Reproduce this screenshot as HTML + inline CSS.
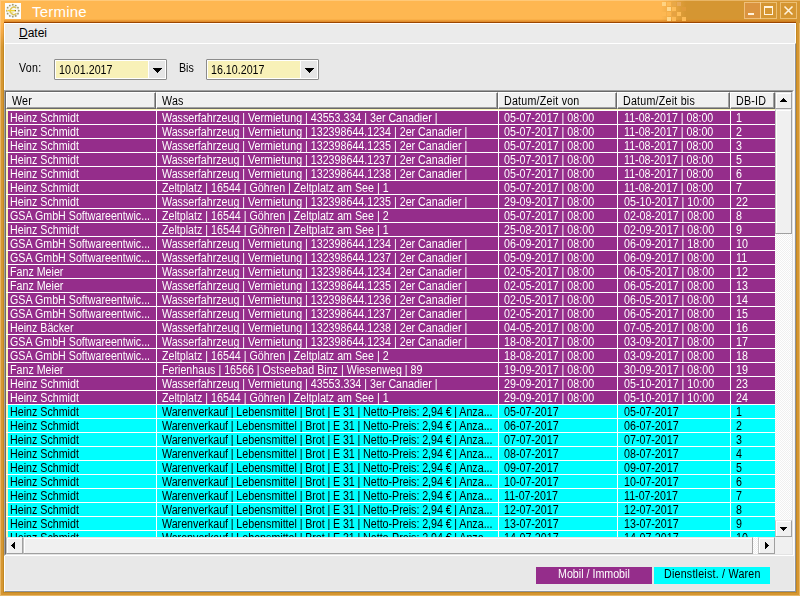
<!DOCTYPE html>
<html lang="de"><head><meta charset="utf-8"><title>Termine</title>
<style>
html,body{margin:0;padding:0}
body{width:800px;height:596px;overflow:hidden;position:relative;background:#D59632;font-family:"Liberation Sans",sans-serif;font-size:11px;color:#000}
div,span{box-sizing:border-box}
.abs{position:absolute}
.t{display:inline-block;font-style:normal;font-weight:normal;transform:scaleX(.89);transform-origin:0 50%;white-space:nowrap}
/* window frame */
#frame{left:0;top:0;width:800px;height:596px;background:#D59632}
#frLg{left:0;top:23px;width:4px;height:40px;background:linear-gradient(to bottom,#FEB751 0,#F2A845 10px,#D59632 24px)}
#frL{left:0;top:0;width:1px;height:596px;background:linear-gradient(to bottom,#FFC57A 0,#FFC57A 26px,#E8B868 48px)}
#frL3{left:3px;top:23px;width:1px;height:570px;background:linear-gradient(to bottom,#F0A23C 0,#E09A38 10px,#C48820 24px)}
#frR{left:796px;top:23px;width:1px;height:570px;background:#C48820}
#frR3{left:799px;top:0;width:1px;height:596px;background:#E8B868}
#frB{left:3px;top:592px;width:794px;height:1px;background:#C48820}
#frB3{left:0;top:595px;width:800px;height:1px;background:#E8B868}
/* title bar */
#tb{left:0;top:0;width:800px;height:23px;background:linear-gradient(to right,#FEB751 0,#FEB751 661px,#D59632 686px,#D59632 100%)}
#tbTop{left:0;top:0;width:800px;height:1px;background:linear-gradient(to right,#FFC978 0,#FFC978 661px,#E8B565 686px)}
#tbBot{left:0;top:19px;width:800px;height:4px;background:linear-gradient(to bottom,rgba(240,150,40,.0) 0,rgba(230,140,30,.35) 1px,rgba(200,110,20,.55) 2px,rgba(200,110,20,.6) 3px,#9C4600 3px,#9C4600 4px)}
#tbBotL{left:0;top:19px;width:4px;height:4px;background:#FEB751}
#tbBotR{left:796px;top:19px;width:4px;height:4px;background:#D59632}
#icon{left:5px;top:3px;width:16px;height:16px;background:#FDFDFB}
#title{left:32px;top:2px;height:19px;line-height:19px;font-size:15px;color:#fff;white-space:nowrap;letter-spacing:0.2px}
.sq{position:absolute;width:4px;height:4px}
.cb{position:absolute;top:2px;height:17px;border:1px solid rgba(255,225,170,.55)}
/* client */
#client{left:4px;top:23px;width:792px;height:569px;background:#E9E9E9}
#menu{left:0;top:0;width:792px;height:20px;background:#EBEBEB;border-top:1px solid #fff;border-left:1px solid #fff;border-right:1px solid #fff}
#menuitem{left:14px;top:2px;font-size:12px;line-height:14px;white-space:nowrap}
#menuitem u{text-decoration-thickness:1px;text-underline-offset:1px}
#panel{will-change:transform;left:0;top:20px;width:792px;height:549px;box-shadow:inset -1px -1px 0 #F2F2F2;background:#E8E8E8;border-top:1px solid #fff;border-left:1px solid #fff;border-right:1px solid #8E939B;border-bottom:1px solid #8E939B}
.lbl{position:absolute;font-size:12px;line-height:14px;white-space:nowrap}
.dp{position:absolute;top:15px;width:113px;height:21px;border:1px solid #8C8C8C;background:#fff;border-radius:1px}
.dp .tx{position:absolute;left:1px;top:1px;width:92px;height:17px;background:#F8F1B8;font-size:12px;line-height:19px;padding-left:3px;white-space:nowrap;overflow:hidden}
.dp .bt{position:absolute;left:94px;top:1px;width:16px;height:17px;background:#E6E6E6}
/* list view */
#lv{left:-1px;top:46px;width:790px;height:466px;border-top:1px solid #A0A0A0;border-left:1px solid #A0A0A0;border-right:1px solid #fff;border-bottom:1px solid #fff;background:#A0A0A0}
#lvi{left:0;top:0;width:788px;height:464px;border-top:1px solid #696969;border-left:1px solid #696969;border-right:1px solid #E3E3E3;border-bottom:1px solid #E3E3E3;background:#FAF4B6;overflow:hidden}
#hdr{left:0;top:0;width:769px;height:17px;background:#F0F0F0}
.h{position:absolute;top:0;height:17px;background:#F0F0F0;border-top:1px solid #fff;border-left:1px solid #fff;border-right:1px solid #696969;border-bottom:1px solid #696969;font-size:12px;line-height:13px;white-space:nowrap;overflow:hidden}
.h i{position:absolute;right:0;bottom:0;left:0;top:0;border-right:1px solid #A0A0A0;border-bottom:1px solid #A0A0A0}
.h b{font-weight:normal;position:absolute;left:5px;top:2px;letter-spacing:.25px}
#rows{left:0;top:18px;width:769px;height:427px;overflow:hidden;border-top:1px solid #fff}
.r{position:relative;height:14px;width:769px;border-bottom:1px solid #fff;background:linear-gradient(to right,#FAF4B6 0,#FAF4B6 2px,#fff 2px);white-space:nowrap;line-height:13px;font-size:12px}
.r span{position:absolute;top:0;height:13px;overflow:hidden;padding-left:2px;line-height:15px}
.p span{background:#952D8B;color:#fff}
.c span{background:#00FFFF;color:#000}
.c .c2 .t{word-spacing:-.25px}
.c1{left:2px;width:148px}
.c2{left:151px;width:341px;padding-left:5px !important}
.c3{left:493px;width:118px;padding-left:5px !important}
.c4{left:612px;width:112px;padding-left:6px !important}
.c5{left:725px;width:44px;padding-left:5px !important}
/* scrollbars */
.sbb{position:absolute;background:#F0F0F0;border-top:1px solid #E8E8E8;border-left:1px solid #C4C4C4;border-right:1px solid #A0A0A0;border-bottom:1px solid #A0A0A0;box-shadow:inset 1px 1px 0 #fff}
.trk{position:absolute;background-color:#fff;background-image:linear-gradient(45deg,#F0F0F0 25%,transparent 25%,transparent 75%,#F0F0F0 75%),linear-gradient(45deg,#F0F0F0 25%,transparent 25%,transparent 75%,#F0F0F0 75%);background-size:2px 2px;background-position:0 0,1px 1px}
.arr{position:absolute;width:0;height:0}
/* legend */
.lg{position:absolute;top:523px;height:17px;line-height:15px;font-size:12px;white-space:nowrap}
</style></head>
<body>
<div id="frame" class="abs"></div>
<div id="frLg" class="abs"></div>
<div id="frL" class="abs"></div>
<div id="frL3" class="abs"></div>
<div id="frR" class="abs"></div>
<div id="frR3" class="abs"></div>
<div id="frB" class="abs"></div>
<div id="frB3" class="abs"></div>

<div id="tb" class="abs"></div>
<div id="tbTop" class="abs"></div>
<div id="tbBot" class="abs"></div>
<div id="tbBotL" class="abs"></div>
<div id="tbBotR" class="abs"></div>
<div class="abs" style="left:0;top:0;width:1px;height:23px;background:#FFC57A"></div>

<div id="sqs">
<div class="sq" style="left:662px;top:2px;background:#FFD382"></div>
<div class="sq" style="left:667px;top:2px;background:#FDBA55"></div>
<div class="sq" style="left:672px;top:2px;background:#E8A848"></div>
<div class="sq" style="left:677px;top:2px;background:#E8AA5A"></div>
<div class="sq" style="left:667px;top:7px;background:#FFD88C"></div>
<div class="sq" style="left:672px;top:7px;background:#FDBC58"></div>
<div class="sq" style="left:682px;top:7px;background:#E09A3A"></div>
<div class="sq" style="left:662px;top:12px;background:#FDB852"></div>
<div class="sq" style="left:667px;top:12px;background:#FDB650"></div>
<div class="sq" style="left:672px;top:12px;background:#E6A242"></div>
<div class="sq" style="left:677px;top:12px;background:#FDBC58"></div>
<div class="sq" style="left:667px;top:17px;background:#FFD88C"></div>
<div class="sq" style="left:672px;top:17px;background:#FDBA55"></div>
<div class="sq" style="left:682px;top:17px;background:#FDBA55"></div>
</div>

<div id="icon" class="abs">
<svg width="16" height="16" viewBox="0 0 16 16">
<circle cx="7.8" cy="7.7" r="6.6" fill="#F1F0EA"/>
<circle cx="7.8" cy="7.7" r="4.6" fill="#FAFAF7"/>
<g fill="#9C9668"><circle cx="7.8" cy="1.7" r="0.85"/><circle cx="10.8" cy="2.5" r="0.85"/><circle cx="13.0" cy="4.7" r="0.85"/><circle cx="13.8" cy="7.7" r="0.85"/><circle cx="13.0" cy="10.7" r="0.85"/><circle cx="10.8" cy="12.9" r="0.85"/><circle cx="7.8" cy="13.7" r="0.85"/><circle cx="4.8" cy="12.9" r="0.85"/><circle cx="2.6" cy="10.7" r="0.85"/><circle cx="1.8" cy="7.7" r="0.85"/><circle cx="2.6" cy="4.7" r="0.85"/><circle cx="4.8" cy="2.5" r="0.85"/></g>
<path d="M11.2 4.9 A3.7 3.7 0 1 0 11.4 10.6" fill="none" stroke="#B8A040" stroke-width="1.3" opacity=".75"/>
<path d="M11.2 4.9 A3.7 3.7 0 1 0 11.4 10.6" fill="none" stroke="#EFD23C" stroke-width="0.7"/>
<path d="M1.6 7.6 H3.2" stroke="#F4E27A" stroke-width="1.2"/><path d="M3 7.6 H10.8" stroke="#F2D62C" stroke-width="1.4"/>
<path d="M9.8 7.6 H11" stroke="#7A6E30" stroke-width="1.2"/>
<path d="M4.4 9.2 H8.6" stroke="#E6CF5A" stroke-width="0.7"/>
</svg>
</div>
<div id="title" class="abs">Termine</div>

<div class="cb" style="left:744px;width:17px;background:#DB9440"></div>
<div class="cb" style="left:760px;width:17px"></div>
<div class="cb" style="left:780px;width:17px"></div>
<div class="abs" style="left:748px;top:13px;width:6px;height:2px;background:#FFF3DC"></div>
<div class="abs" style="left:764px;top:6px;width:9px;height:9px;border:1px solid #FFF3DC;border-top-width:2px"></div>
<svg class="abs" style="left:783px;top:5px" width="11" height="11" viewBox="0 0 11 11"><path d="M1.5 1.5 L9.5 9.5 M9.5 1.5 L1.5 9.5" stroke="#FFF3DC" stroke-width="1.6" fill="none"/></svg>

<div id="client" class="abs">
  <div id="menu" class="abs"><div id="menuitem" class="abs"><u>D</u>atei</div></div>
  <div id="panel" class="abs">
    <div class="lbl" style="left:14px;top:17px"><em class="t" style="letter-spacing:.3px">Von:</em></div>
    <div class="dp" style="left:49px"><div class="tx"><em class="t">10.01.2017</em></div><div class="bt"><svg class="abs" style="left:4px;top:7px" width="9" height="5" viewBox="0 0 9 5" shape-rendering="crispEdges"><path d="M0 0h9v1h-9zM1 1h7v1h-7zM2 2h5v1h-5zM3 3h3v1h-3zM4 4h1v1h-1z" fill="#000"/></svg></div></div>
    <div class="lbl" style="left:174px;top:17px"><em class="t">Bis</em></div>
    <div class="dp" style="left:201px"><div class="tx"><em class="t">16.10.2017</em></div><div class="bt"><svg class="abs" style="left:4px;top:7px" width="9" height="5" viewBox="0 0 9 5" shape-rendering="crispEdges"><path d="M0 0h9v1h-9zM1 1h7v1h-7zM2 2h5v1h-5zM3 3h3v1h-3zM4 4h1v1h-1z" fill="#000"/></svg></div></div>

    <div id="lv" class="abs"><div id="lvi" class="abs">
      <div id="hdr" class="abs">
        <div class="h" style="left:0;width:150px"><i></i><b class="t">Wer</b></div>
        <div class="h" style="left:150px;width:342px"><i></i><b class="t">Was</b></div>
        <div class="h" style="left:492px;width:119px"><i></i><b class="t">Datum/Zeit von</b></div>
        <div class="h" style="left:611px;width:113px"><i></i><b class="t">Datum/Zeit bis</b></div>
        <div class="h" style="left:724px;width:45px"><i></i><b class="t">DB-ID</b></div>
      </div>
      <div id="rows" class="abs">
<div class="r p"><span class="c1"><em class="t">Heinz Schmidt</em></span><span class="c2"><em class="t">Wasserfahrzeug | Vermietung | 43553.334 | 3er Canadier |</em></span><span class="c3"><em class="t">05-07-2017 | 08:00</em></span><span class="c4"><em class="t">11-08-2017 | 08:00</em></span><span class="c5"><em class="t">1</em></span></div>
<div class="r p"><span class="c1"><em class="t">Heinz Schmidt</em></span><span class="c2"><em class="t">Wasserfahrzeug | Vermietung | 132398644.1234 | 2er Canadier |</em></span><span class="c3"><em class="t">05-07-2017 | 08:00</em></span><span class="c4"><em class="t">11-08-2017 | 08:00</em></span><span class="c5"><em class="t">2</em></span></div>
<div class="r p"><span class="c1"><em class="t">Heinz Schmidt</em></span><span class="c2"><em class="t">Wasserfahrzeug | Vermietung | 132398644.1235 | 2er Canadier |</em></span><span class="c3"><em class="t">05-07-2017 | 08:00</em></span><span class="c4"><em class="t">11-08-2017 | 08:00</em></span><span class="c5"><em class="t">3</em></span></div>
<div class="r p"><span class="c1"><em class="t">Heinz Schmidt</em></span><span class="c2"><em class="t">Wasserfahrzeug | Vermietung | 132398644.1237 | 2er Canadier |</em></span><span class="c3"><em class="t">05-07-2017 | 08:00</em></span><span class="c4"><em class="t">11-08-2017 | 08:00</em></span><span class="c5"><em class="t">5</em></span></div>
<div class="r p"><span class="c1"><em class="t">Heinz Schmidt</em></span><span class="c2"><em class="t">Wasserfahrzeug | Vermietung | 132398644.1238 | 2er Canadier |</em></span><span class="c3"><em class="t">05-07-2017 | 08:00</em></span><span class="c4"><em class="t">11-08-2017 | 08:00</em></span><span class="c5"><em class="t">6</em></span></div>
<div class="r p"><span class="c1"><em class="t">Heinz Schmidt</em></span><span class="c2"><em class="t">Zeltplatz | 16544 | Göhren | Zeltplatz am See | 1</em></span><span class="c3"><em class="t">05-07-2017 | 08:00</em></span><span class="c4"><em class="t">11-08-2017 | 08:00</em></span><span class="c5"><em class="t">7</em></span></div>
<div class="r p"><span class="c1"><em class="t">Heinz Schmidt</em></span><span class="c2"><em class="t">Wasserfahrzeug | Vermietung | 132398644.1235 | 2er Canadier |</em></span><span class="c3"><em class="t">29-09-2017 | 08:00</em></span><span class="c4"><em class="t">05-10-2017 | 10:00</em></span><span class="c5"><em class="t">22</em></span></div>
<div class="r p"><span class="c1"><em class="t">GSA GmbH Softwareentwic...</em></span><span class="c2"><em class="t">Zeltplatz | 16544 | Göhren | Zeltplatz am See | 2</em></span><span class="c3"><em class="t">05-07-2017 | 08:00</em></span><span class="c4"><em class="t">02-08-2017 | 08:00</em></span><span class="c5"><em class="t">8</em></span></div>
<div class="r p"><span class="c1"><em class="t">Heinz Schmidt</em></span><span class="c2"><em class="t">Zeltplatz | 16544 | Göhren | Zeltplatz am See | 1</em></span><span class="c3"><em class="t">25-08-2017 | 08:00</em></span><span class="c4"><em class="t">02-09-2017 | 08:00</em></span><span class="c5"><em class="t">9</em></span></div>
<div class="r p"><span class="c1"><em class="t">GSA GmbH Softwareentwic...</em></span><span class="c2"><em class="t">Wasserfahrzeug | Vermietung | 132398644.1234 | 2er Canadier |</em></span><span class="c3"><em class="t">06-09-2017 | 08:00</em></span><span class="c4"><em class="t">06-09-2017 | 18:00</em></span><span class="c5"><em class="t">10</em></span></div>
<div class="r p"><span class="c1"><em class="t">GSA GmbH Softwareentwic...</em></span><span class="c2"><em class="t">Wasserfahrzeug | Vermietung | 132398644.1237 | 2er Canadier |</em></span><span class="c3"><em class="t">05-09-2017 | 08:00</em></span><span class="c4"><em class="t">06-09-2017 | 08:00</em></span><span class="c5"><em class="t">11</em></span></div>
<div class="r p"><span class="c1"><em class="t">Fanz Meier</em></span><span class="c2"><em class="t">Wasserfahrzeug | Vermietung | 132398644.1234 | 2er Canadier |</em></span><span class="c3"><em class="t">02-05-2017 | 08:00</em></span><span class="c4"><em class="t">06-05-2017 | 08:00</em></span><span class="c5"><em class="t">12</em></span></div>
<div class="r p"><span class="c1"><em class="t">Fanz Meier</em></span><span class="c2"><em class="t">Wasserfahrzeug | Vermietung | 132398644.1235 | 2er Canadier |</em></span><span class="c3"><em class="t">02-05-2017 | 08:00</em></span><span class="c4"><em class="t">06-05-2017 | 08:00</em></span><span class="c5"><em class="t">13</em></span></div>
<div class="r p"><span class="c1"><em class="t">GSA GmbH Softwareentwic...</em></span><span class="c2"><em class="t">Wasserfahrzeug | Vermietung | 132398644.1236 | 2er Canadier |</em></span><span class="c3"><em class="t">02-05-2017 | 08:00</em></span><span class="c4"><em class="t">06-05-2017 | 08:00</em></span><span class="c5"><em class="t">14</em></span></div>
<div class="r p"><span class="c1"><em class="t">GSA GmbH Softwareentwic...</em></span><span class="c2"><em class="t">Wasserfahrzeug | Vermietung | 132398644.1237 | 2er Canadier |</em></span><span class="c3"><em class="t">02-05-2017 | 08:00</em></span><span class="c4"><em class="t">06-05-2017 | 08:00</em></span><span class="c5"><em class="t">15</em></span></div>
<div class="r p"><span class="c1"><em class="t">Heinz Bäcker</em></span><span class="c2"><em class="t">Wasserfahrzeug | Vermietung | 132398644.1238 | 2er Canadier |</em></span><span class="c3"><em class="t">04-05-2017 | 08:00</em></span><span class="c4"><em class="t">07-05-2017 | 08:00</em></span><span class="c5"><em class="t">16</em></span></div>
<div class="r p"><span class="c1"><em class="t">GSA GmbH Softwareentwic...</em></span><span class="c2"><em class="t">Wasserfahrzeug | Vermietung | 132398644.1234 | 2er Canadier |</em></span><span class="c3"><em class="t">18-08-2017 | 08:00</em></span><span class="c4"><em class="t">03-09-2017 | 08:00</em></span><span class="c5"><em class="t">17</em></span></div>
<div class="r p"><span class="c1"><em class="t">GSA GmbH Softwareentwic...</em></span><span class="c2"><em class="t">Zeltplatz | 16544 | Göhren | Zeltplatz am See | 2</em></span><span class="c3"><em class="t">18-08-2017 | 08:00</em></span><span class="c4"><em class="t">03-09-2017 | 08:00</em></span><span class="c5"><em class="t">18</em></span></div>
<div class="r p"><span class="c1"><em class="t">Fanz Meier</em></span><span class="c2"><em class="t">Ferienhaus | 16566 | Ostseebad Binz | Wiesenweg | 89</em></span><span class="c3"><em class="t">19-09-2017 | 08:00</em></span><span class="c4"><em class="t">30-09-2017 | 08:00</em></span><span class="c5"><em class="t">19</em></span></div>
<div class="r p"><span class="c1"><em class="t">Heinz Schmidt</em></span><span class="c2"><em class="t">Wasserfahrzeug | Vermietung | 43553.334 | 3er Canadier |</em></span><span class="c3"><em class="t">29-09-2017 | 08:00</em></span><span class="c4"><em class="t">05-10-2017 | 10:00</em></span><span class="c5"><em class="t">23</em></span></div>
<div class="r p"><span class="c1"><em class="t">Heinz Schmidt</em></span><span class="c2"><em class="t">Zeltplatz | 16544 | Göhren | Zeltplatz am See | 1</em></span><span class="c3"><em class="t">29-09-2017 | 08:00</em></span><span class="c4"><em class="t">05-10-2017 | 10:00</em></span><span class="c5"><em class="t">24</em></span></div>
<div class="r c"><span class="c1"><em class="t">Heinz Schmidt</em></span><span class="c2"><em class="t">Warenverkauf | Lebensmittel | Brot | E 31 | Netto-Preis: 2,94 € | Anza...</em></span><span class="c3"><em class="t">05-07-2017</em></span><span class="c4"><em class="t">05-07-2017</em></span><span class="c5"><em class="t">1</em></span></div>
<div class="r c"><span class="c1"><em class="t">Heinz Schmidt</em></span><span class="c2"><em class="t">Warenverkauf | Lebensmittel | Brot | E 31 | Netto-Preis: 2,94 € | Anza...</em></span><span class="c3"><em class="t">06-07-2017</em></span><span class="c4"><em class="t">06-07-2017</em></span><span class="c5"><em class="t">2</em></span></div>
<div class="r c"><span class="c1"><em class="t">Heinz Schmidt</em></span><span class="c2"><em class="t">Warenverkauf | Lebensmittel | Brot | E 31 | Netto-Preis: 2,94 € | Anza...</em></span><span class="c3"><em class="t">07-07-2017</em></span><span class="c4"><em class="t">07-07-2017</em></span><span class="c5"><em class="t">3</em></span></div>
<div class="r c"><span class="c1"><em class="t">Heinz Schmidt</em></span><span class="c2"><em class="t">Warenverkauf | Lebensmittel | Brot | E 31 | Netto-Preis: 2,94 € | Anza...</em></span><span class="c3"><em class="t">08-07-2017</em></span><span class="c4"><em class="t">08-07-2017</em></span><span class="c5"><em class="t">4</em></span></div>
<div class="r c"><span class="c1"><em class="t">Heinz Schmidt</em></span><span class="c2"><em class="t">Warenverkauf | Lebensmittel | Brot | E 31 | Netto-Preis: 2,94 € | Anza...</em></span><span class="c3"><em class="t">09-07-2017</em></span><span class="c4"><em class="t">09-07-2017</em></span><span class="c5"><em class="t">5</em></span></div>
<div class="r c"><span class="c1"><em class="t">Heinz Schmidt</em></span><span class="c2"><em class="t">Warenverkauf | Lebensmittel | Brot | E 31 | Netto-Preis: 2,94 € | Anza...</em></span><span class="c3"><em class="t">10-07-2017</em></span><span class="c4"><em class="t">10-07-2017</em></span><span class="c5"><em class="t">6</em></span></div>
<div class="r c"><span class="c1"><em class="t">Heinz Schmidt</em></span><span class="c2"><em class="t">Warenverkauf | Lebensmittel | Brot | E 31 | Netto-Preis: 2,94 € | Anza...</em></span><span class="c3"><em class="t">11-07-2017</em></span><span class="c4"><em class="t">11-07-2017</em></span><span class="c5"><em class="t">7</em></span></div>
<div class="r c"><span class="c1"><em class="t">Heinz Schmidt</em></span><span class="c2"><em class="t">Warenverkauf | Lebensmittel | Brot | E 31 | Netto-Preis: 2,94 € | Anza...</em></span><span class="c3"><em class="t">12-07-2017</em></span><span class="c4"><em class="t">12-07-2017</em></span><span class="c5"><em class="t">8</em></span></div>
<div class="r c"><span class="c1"><em class="t">Heinz Schmidt</em></span><span class="c2"><em class="t">Warenverkauf | Lebensmittel | Brot | E 31 | Netto-Preis: 2,94 € | Anza...</em></span><span class="c3"><em class="t">13-07-2017</em></span><span class="c4"><em class="t">13-07-2017</em></span><span class="c5"><em class="t">9</em></span></div>
<div class="r c"><span class="c1"><em class="t">Heinz Schmidt</em></span><span class="c2"><em class="t">Warenverkauf | Lebensmittel | Brot | E 31 | Netto-Preis: 2,94 € | Anza...</em></span><span class="c3"><em class="t">14-07-2017</em></span><span class="c4"><em class="t">14-07-2017</em></span><span class="c5"><em class="t">10</em></span></div>
      </div>
      <!-- vertical scrollbar -->
      <div class="trk" style="left:769px;top:0;width:17px;height:445px"></div>
      <div class="sbb" style="left:769px;top:0;width:17px;height:17px"><svg class="abs" style="left:4px;top:5px" width="7" height="4" viewBox="0 0 7 4" shape-rendering="crispEdges"><path d="M3 0h1v1h-1zM2 1h3v1h-3zM1 2h5v1h-5zM0 3h7v1h-7z" fill="#000"/></svg></div>
      <div class="sbb" style="left:769px;top:17px;width:17px;height:125px"></div>
      <div class="sbb" style="left:769px;top:428px;width:17px;height:17px"><svg class="abs" style="left:4px;top:6px" width="7" height="4" viewBox="0 0 7 4" shape-rendering="crispEdges"><path d="M0 0h7v1h-7zM1 1h5v1h-5zM2 2h3v1h-3zM3 3h1v1h-1z" fill="#000"/></svg></div>
      <!-- horizontal scrollbar -->
      <div class="trk" style="left:0;top:445px;width:769px;height:17px"></div>
      <div class="sbb" style="left:0;top:445px;width:17px;height:17px"><svg class="abs" style="left:4px;top:4px" width="4" height="7" viewBox="0 0 4 7" shape-rendering="crispEdges"><path d="M3 0h1v7h-1zM2 1h1v5h-1zM1 2h1v3h-1zM0 3h1v1h-1z" fill="#000"/></svg></div>
      <div class="sbb" style="left:17px;top:445px;width:730px;height:17px"></div>
      <div class="sbb" style="left:752px;top:445px;width:17px;height:17px"><svg class="abs" style="left:6px;top:4px" width="4" height="7" viewBox="0 0 4 7" shape-rendering="crispEdges"><path d="M0 0h1v7h-1zM1 1h1v5h-1zM2 2h1v3h-1zM3 3h1v1h-1z" fill="#000"/></svg></div>
      <div class="abs" style="left:769px;top:445px;width:17px;height:17px;background:#F0F0F0"></div>
    </div></div>

    <div class="lg" style="left:531px;width:116px;background:#952D8B;color:#fff"><em class="t" style="position:absolute;left:22px;top:0">Mobil / Immobil</em></div>
    <div class="lg" style="left:649px;width:116px;background:#00FFFF;color:#000"><em class="t" style="position:absolute;left:10px;top:0;letter-spacing:.25px">Dienstleist. / Waren</em></div>
  </div>
</div>
</body></html>
